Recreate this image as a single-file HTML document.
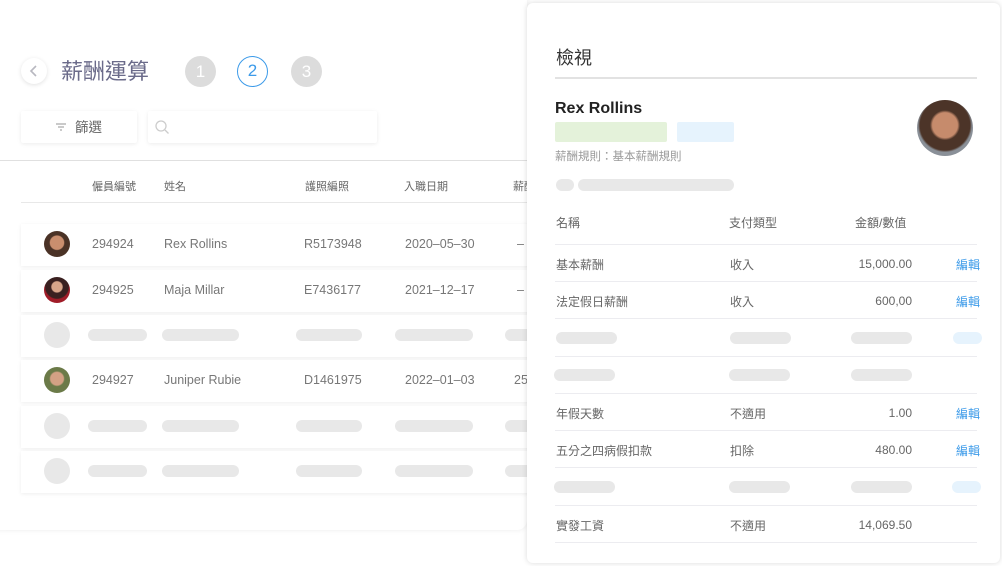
<!DOCTYPE html>
<html><head><meta charset="utf-8"><style>
*{margin:0;padding:0;box-sizing:border-box}
body{width:1002px;height:566px;background:#fff;position:relative;overflow:hidden;font-family:"Liberation Sans","Noto Sans CJK TC",sans-serif;color:#666;line-height:1.2}
.a{position:absolute}
.sk{position:absolute;background:#e8e8e8;border-radius:7px;height:12px}
.row{position:absolute;left:21px;width:520px;height:42px;background:#fff;box-shadow:0 1px 4px rgba(0,0,0,.07)}
.t{position:absolute;font-size:12.5px;color:#777;white-space:nowrap}
.av{position:absolute;left:44px;width:26px;height:26px;border-radius:50%;background:#e8e8e8}
.pl{position:absolute;left:555px;width:422px;height:1px;background:#ececf0}
.pt{position:absolute;font-size:12px;color:#666;white-space:nowrap}
.ed{position:absolute;left:956px;font-size:12px;color:#3d9be9}
</style></head><body>
<div class="a" style="left:-10px;top:-10px;width:537px;height:540px;border-radius:10px;box-shadow:0 0 6px rgba(0,0,0,.08);background:#fff"></div>
<div class="a" style="left:21px;top:58px;width:26px;height:26px;border-radius:50%;background:#fff;box-shadow:0 1px 4px rgba(0,0,0,.12)"></div>
<svg class="a" style="left:28px;top:64px" width="12" height="14"><path d="M8 2 L3 7 L8 12" stroke="#b8b8c0" stroke-width="1.6" fill="none"/></svg>
<div class="a" style="left:61px;top:59px;font-size:22px;color:#6b6b8a">薪酬運算</div>
<div class="a" style="left:185px;top:56px;width:31px;height:31px;border-radius:50%;background:#dcdcdc;color:#fff;font-size:17px;text-align:center;line-height:31px">1</div>
<div class="a" style="left:237px;top:56px;width:31px;height:31px;border-radius:50%;border:1.5px solid #3d9be9;color:#3d9be9;font-size:17px;text-align:center;line-height:28px">2</div>
<div class="a" style="left:291px;top:56px;width:31px;height:31px;border-radius:50%;background:#dcdcdc;color:#fff;font-size:17px;text-align:center;line-height:31px">3</div>
<div class="a" style="left:21px;top:111px;width:116px;height:32px;background:#fff;box-shadow:0 1px 4px rgba(0,0,0,.08);border-radius:2px"></div>
<svg class="a" style="left:55px;top:121px" width="12" height="12"><path d="M1 3h10M3 6h6M5 9h2" stroke="#aaa" stroke-width="1.2"/></svg>
<div class="a" style="left:75px;top:120px;font-size:13.5px;color:#666">篩選</div>
<div class="a" style="left:148px;top:111px;width:229px;height:32px;background:#fff;box-shadow:0 1px 4px rgba(0,0,0,.08);border-radius:2px"></div>
<svg class="a" style="left:154px;top:119px" width="16" height="16"><circle cx="7" cy="7" r="5" stroke="#ccc" stroke-width="1.3" fill="none"/><path d="M11 11l3.5 3.5" stroke="#ccc" stroke-width="1.3"/></svg>
<div class="a" style="left:0;top:160px;width:527px;height:1px;background:#e0e0e0"></div>
<div class="t" style="left:92px;top:181px;font-size:11px;color:#666">僱員編號</div>
<div class="t" style="left:164px;top:181px;font-size:11px;color:#666">姓名</div>
<div class="t" style="left:305px;top:181px;font-size:11px;color:#666">護照編照</div>
<div class="t" style="left:404px;top:181px;font-size:11px;color:#666">入職日期</div>
<div class="t" style="left:513px;top:181px;font-size:11px;color:#666">薪酬</div>
<div class="a" style="left:21px;top:202px;width:506px;height:1px;background:#e8e8e8"></div>

<div class="row" style="top:224px"></div>
<div class="av" style="top:231px;background:radial-gradient(circle at 50% 45%,#c98e6e 0 35%,#4a3226 40%)"></div>
<div class="t" style="left:92px;top:237px">294924</div><div class="t" style="left:164px;top:237px">Rex Rollins</div><div class="t" style="left:304px;top:237px">R5173948</div><div class="t" style="left:405px;top:237px">2020–05–30</div><div class="t" style="left:517px;top:237px">–</div>
<div class="row" style="top:270px"></div>
<div class="av" style="top:277px;background:radial-gradient(circle at 50% 38%,#d9a58a 0 25%,#3a2020 30% 55%,#a01c28 60%)"></div>
<div class="t" style="left:92px;top:283px">294925</div><div class="t" style="left:164px;top:283px">Maja Millar</div><div class="t" style="left:304px;top:283px">E7436177</div><div class="t" style="left:405px;top:283px">2021–12–17</div><div class="t" style="left:517px;top:283px">–</div>
<div class="row" style="top:315px"></div>
<div class="av" style="top:322px"></div><div class="sk" style="left:88px;top:329px;width:59px"></div><div class="sk" style="left:162px;top:329px;width:77px"></div><div class="sk" style="left:296px;top:329px;width:66px"></div><div class="sk" style="left:395px;top:329px;width:78px"></div><div class="sk" style="left:505px;top:329px;width:30px"></div>
<div class="row" style="top:360px"></div>
<div class="av" style="top:367px;background:radial-gradient(circle at 50% 45%,#d3a184 0 33%,#6b7a48 40%)"></div>
<div class="t" style="left:92px;top:373px">294927</div><div class="t" style="left:164px;top:373px">Juniper Rubie</div><div class="t" style="left:304px;top:373px">D1461975</div><div class="t" style="left:405px;top:373px">2022–01–03</div><div class="t" style="left:514px;top:373px">25</div>
<div class="row" style="top:406px"></div>
<div class="av" style="top:413px"></div><div class="sk" style="left:88px;top:420px;width:59px"></div><div class="sk" style="left:162px;top:420px;width:77px"></div><div class="sk" style="left:296px;top:420px;width:66px"></div><div class="sk" style="left:395px;top:420px;width:78px"></div><div class="sk" style="left:505px;top:420px;width:30px"></div>
<div class="row" style="top:451px"></div>
<div class="av" style="top:458px"></div><div class="sk" style="left:88px;top:465px;width:59px"></div><div class="sk" style="left:162px;top:465px;width:77px"></div><div class="sk" style="left:296px;top:465px;width:66px"></div><div class="sk" style="left:395px;top:465px;width:78px"></div><div class="sk" style="left:505px;top:465px;width:30px"></div>

<div class="a" style="left:527px;top:3px;width:473px;height:560px;background:#fff;border-radius:6px;box-shadow:0 0 6px rgba(0,0,0,.15)"></div>
<div class="a" style="left:556px;top:48px;font-size:18px;color:#333">檢視</div>
<div class="a" style="left:555px;top:77px;width:422px;height:2px;background:#e2e2e2"></div>
<div class="a" style="left:555px;top:99px;font-size:16px;font-weight:bold;color:#222">Rex Rollins</div>
<div class="a" style="left:555px;top:122px;width:112px;height:20px;background:#e4f2da;border-radius:2px"></div>
<div class="a" style="left:677px;top:122px;width:57px;height:20px;background:#e6f3fd;border-radius:2px"></div>
<div class="a" style="left:555px;top:151px;font-size:11.5px;color:#999">薪酬規則：基本薪酬規則</div>
<div class="sk" style="left:556px;top:179px;width:18px"></div><div class="sk" style="left:578px;top:179px;width:156px"></div>
<div class="a" style="left:917px;top:100px;width:56px;height:56px;border-radius:50%;background:radial-gradient(circle at 50% 45%,#c68b6c 0 30%,#4c3428 36% 60%,#8a9098 65%)"></div>
<div class="pt" style="left:556px;top:216px">名稱</div><div class="pt" style="left:729px;top:216px">支付類型</div><div class="pt" style="left:855px;top:216px">金額/數值</div>
<div class="pl" style="top:244px"></div><div class="pl" style="top:281px"></div><div class="pl" style="top:318px"></div><div class="pl" style="top:356px"></div><div class="pl" style="top:393px"></div><div class="pl" style="top:430px"></div><div class="pl" style="top:467px"></div><div class="pl" style="top:505px"></div><div class="pl" style="top:542px"></div>
<div class="pt" style="left:556px;top:258px">基本薪酬</div><div class="pt" style="left:730px;top:258px">收入</div><div class="pt" style="left:800px;width:112px;text-align:right;top:257px">15,000.00</div><div class="ed" style="top:258px">編輯</div>
<div class="pt" style="left:556px;top:295px">法定假日薪酬</div><div class="pt" style="left:730px;top:295px">收入</div><div class="pt" style="left:800px;width:112px;text-align:right;top:294px">600,00</div><div class="ed" style="top:295px">編輯</div>
<div class="sk" style="left:556px;top:332px;width:61px"></div><div class="sk" style="left:730px;top:332px;width:61px"></div><div class="sk" style="left:851px;top:332px;width:61px"></div><div class="sk" style="left:953px;top:332px;width:29px;background:#e6f3fd"></div>
<div class="sk" style="left:554px;top:369px;width:61px"></div><div class="sk" style="left:729px;top:369px;width:61px"></div><div class="sk" style="left:851px;top:369px;width:61px"></div>
<div class="pt" style="left:556px;top:407px">年假天數</div><div class="pt" style="left:730px;top:407px">不適用</div><div class="pt" style="left:800px;width:112px;text-align:right;top:406px">1.00</div><div class="ed" style="top:407px">編輯</div>
<div class="pt" style="left:556px;top:444px">五分之四病假扣款</div><div class="pt" style="left:730px;top:444px">扣除</div><div class="pt" style="left:800px;width:112px;text-align:right;top:443px">480.00</div><div class="ed" style="top:444px">編輯</div>
<div class="sk" style="left:554px;top:481px;width:61px"></div><div class="sk" style="left:729px;top:481px;width:61px"></div><div class="sk" style="left:851px;top:481px;width:61px"></div><div class="sk" style="left:952px;top:481px;width:29px;background:#e6f3fd"></div>
<div class="pt" style="left:556px;top:519px">實發工資</div><div class="pt" style="left:730px;top:519px">不適用</div><div class="pt" style="left:800px;width:112px;text-align:right;top:518px">14,069.50</div>
</body></html>
